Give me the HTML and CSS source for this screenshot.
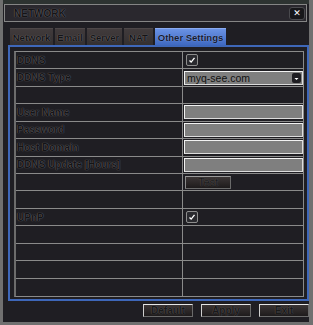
FILE: index.html
```html
<!DOCTYPE html>
<html lang="en">
<head>
    <meta charset="UTF-8">
    <title>Network</title>
    <link rel="stylesheet" href="styles.css">
</head>
<body>
    <div class="window">
        <div class="titlebar">
            <span class="title">NETWORK</span>
            <button class="close">&#x2715;</button>
        </div>

        <div class="tabs">
            <div class="tab tab-network">Network</div>
            <div class="tab tab-email">Email</div>
            <div class="tab tab-server">Server</div>
            <div class="tab tab-nat">NAT</div>
            <div class="tab tab-other active">Other Settings</div>
        </div>

        <div class="panel">
            <div class="grid">
                <div class="label">DDNS</div>
                <div class="value"><span class="check"><svg viewBox="0 0 12 12"><polyline points="3,6.5 5,8.5 9,3.5"/></svg></span></div>

                <div class="label">DDNS Type</div>
                <div class="value">
                    <div class="select">
                        <span>myq-see.com</span>
                        <span class="arrow"><svg viewBox="0 0 9 10"><polygon points="2.5,5 6.5,5 4.5,7"/></svg></span>
                    </div>
                </div>

                <div class="label"></div>
                <div class="value"></div>

                <div class="label">User Name</div>
                <div class="value"><div class="input"></div></div>

                <div class="label">Password</div>
                <div class="value"><div class="input"></div></div>

                <div class="label">Host Domain</div>
                <div class="value"><div class="input"></div></div>

                <div class="label">DDNS Update [Hours]</div>
                <div class="value"><div class="input"></div></div>

                <div class="label"></div>
                <div class="value"><button class="btn btn-test">Test</button></div>

                <div class="label"></div>
                <div class="value"></div>

                <div class="label">UPnP</div>
                <div class="value"><span class="check"><svg viewBox="0 0 12 12"><polyline points="3,6.5 5,8.5 9,3.5"/></svg></span></div>

                <div class="label"></div>
                <div class="value"></div>

                <div class="label"></div>
                <div class="value"></div>

                <div class="label"></div>
                <div class="value"></div>

                <div class="label last"></div>
                <div class="value last"></div>
            </div>
        </div>

        <div class="footer">
            <button class="btn">Default</button>
            <button class="btn">Apply</button>
            <button class="btn">Exit</button>
        </div>
    </div>
</body>
</html>
```

FILE: styles.css
```css
/* CSS */
* {
    box-sizing: border-box;
}

:root {
    --frame: #707070;
    --body: #1f1e23;
    --line: #8a8a8a;
    --text: #141416;
    --halo: 0 0 1px rgba(150, 150, 150, 0.9);
    --blue: #3e67b9;
    --field: #7f7f7f;
}

body {
    margin: 0;
    width: 313px;
    height: 325px;
    background: var(--frame);
    font-family: "Liberation Sans", Arial, sans-serif;
    overflow: hidden;
}

.window {
    margin-left: 3px;
    width: 306px;
    height: 322px;
    padding-top: 4px;
    background: var(--body);
    box-shadow: inset 0 4px 0 #2d3331;
}

.titlebar {
    margin-left: 1px;
    width: 303px;
    height: 18px;
    display: flex;
    align-items: center;
    justify-content: space-between;
    padding: 0 1px 0 9px;
    border: 1px solid #858585;
    background: #2a282e;
}

.title {
    font-weight: 700;
    font-size: 10px;
    color: var(--text);
    text-shadow: var(--halo);
}

.close {
    width: 16px;
    height: 13px;
    padding: 0;
    border: 1px solid #4a4a4e;
    border-radius: 3px;
    background: #17171a;
    color: #fff;
    font-size: 9px;
    font-weight: 900;
    line-height: 11px;
    font-family: "DejaVu Sans", sans-serif;
}

.tabs {
    display: flex;
    gap: 2px;
    margin: 6px 0 0 7px;
    height: 17px;
}

.tab {
    height: 17px;
    display: flex;
    align-items: center;
    justify-content: center;
    font-weight: 700;
    font-size: 9.5px;
    color: var(--text);
    text-shadow: var(--halo);
    background: linear-gradient(#413b3c, #343031);
    border-top: 1px solid #4d4748;
}

.tab-network { width: 43px; }
.tab-email { width: 30px; }
.tab-server { width: 35px; }
.tab-nat { width: 29px; }
.tab-other { width: 71px; }

.tab.active {
    background: linear-gradient(#6a92e4, #3f69c2);
    border-top-color: #8aaaf0;
    color: #121a33;
    text-shadow: 0 0 1px rgba(190, 205, 240, 0.8);
}

.panel {
    margin-left: 5px;
    width: 301px;
    height: 256px;
    padding: 4px 3px 1px 4px;
    border: 2px solid var(--blue);
}

.grid {
    width: 290px;
    height: 246px;
    display: grid;
    grid-template-columns: 167px 1fr;
    grid-template-rows: repeat(14, 1fr);
    border: 1px solid var(--line);
    border-left: 2px solid #6c6c6c;
}

.label,
.value {
    display: flex;
    align-items: center;
    border-bottom: 1px solid var(--line);
    min-height: 0;
}

.label {
    padding-left: 1px;
    border-right: 1px solid var(--line);
    font-weight: 700;
    font-size: 10px;
    color: var(--text);
    text-shadow: var(--halo);
}

.value {
    padding-left: 1px;
}

.label.last,
.value.last {
    border-bottom: 0;
}

.check {
    margin-left: 2px;
    width: 12px;
    height: 12px;
    border: 1px solid #8d8d8d;
    border-radius: 2px;
    background: #2a2a2f;
}

.check svg {
    display: block;
    width: 10px;
    height: 10px;
}

.check polyline {
    fill: none;
    stroke: #fff;
    stroke-width: 1.6;
}

.select,
.input {
    width: 119px;
    height: 14px;
    background: var(--field);
    border: 1px solid #f2f2f2;
    border-right-color: #dcdcdc;
    border-bottom-color: #dcdcdc;
}

.select {
    display: flex;
    align-items: center;
    justify-content: space-between;
    padding: 0 1px 0 2px;
    font-size: 10.5px;
    color: #111;
}

.arrow {
    width: 9px;
    height: 10px;
    border-radius: 2px;
    background: #1e1d22;
}

.arrow svg {
    display: block;
    width: 9px;
    height: 10px;
}

.arrow polygon {
    fill: #fff;
}

.btn {
    height: 13px;
    padding: 0;
    font-family: "Liberation Sans", Arial, sans-serif;
    font-size: 10px;
    font-weight: 700;
    line-height: 11px;
    color: #1a1a1a;
    text-shadow: 0 0 1px rgba(120, 120, 120, 0.8);
    background: linear-gradient(#3b3535, #1e1b1c);
    border: 1px solid #6a6a6a;
    border-top-color: #e6e6e6;
    border-left-color: #cfcfcf;
}

.btn-test {
    width: 46px;
    margin-left: 1px;
    border-top-color: #9a9a9a;
    border-left-color: #8a8a8a;
    font-weight: 400;
    font-size: 11px;
}

.footer {
    display: flex;
    justify-content: flex-end;
    gap: 8px;
    margin-top: 3px;
}

.footer .btn {
    width: 50px;
}
```
